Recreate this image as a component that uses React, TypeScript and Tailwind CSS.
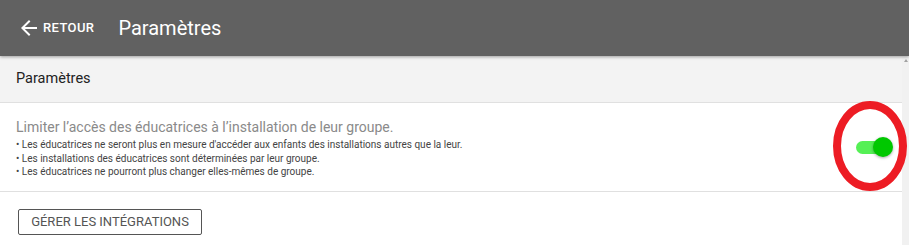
import React from "react";

export default function App() {
  return (
    <div className="w-[909px] h-[245px] overflow-hidden bg-white relative" style={{ fontFamily: "Roboto, 'Liberation Sans', sans-serif" }}>
      <header className="h-[56px] bg-[#616161] flex items-center relative z-10 shadow-[0_1px_3px_rgba(0,0,0,0.35)]">
        <div className="flex items-center pl-[17px]">
          <svg width="24" height="24" viewBox="0 0 24 24" className="text-white">
            <path d="M20 11H7.83l5.59-5.59L12 4l-8 8 8 8 1.41-1.41L7.83 13H20v-2z" fill="currentColor" />
          </svg>
          <span className="ml-[2px] text-white text-[13px] font-medium tracking-[0.4px]">RETOUR</span>
        </div>
        <h1 className="ml-[24px] text-white text-[20px] font-normal">Paramètres</h1>
      </header>
      <div className="flex h-[189px]">
        <main className="flex-1">
          <div className="h-[47px] bg-[#f3f3f3] border-b border-[#e0e0e0] flex items-center pl-[16px]">
            <span className="text-[14.5px] text-[#222]">Paramètres</span>
          </div>
          <div className="h-[89px] border-b border-[#e0e0e0] flex items-center justify-between pl-[16px] pr-[8px]">
            <div className="pt-[2px]">
              <div className="text-[14px] text-[#8a8a8a] leading-[20px]">Limiter l’accès des éducatrices à l’installation de leur groupe.</div>
              <ul className="mt-[1px] text-[10px] text-[#444] leading-[13.5px]">
                <li>• Les éducatrices ne seront plus en mesure d'accéder aux enfants des installations autres que la leur.</li>
                <li>• Les installations des éducatrices sont déterminées par leur groupe.</li>
                <li>• Les éducatrices ne pourront plus changer elles-mêmes de groupe.</li>
              </ul>
            </div>
            <div className="relative w-[36px] h-[20px] mr-[2px] flex items-center">
              <div className="w-[32px] h-[13px] rounded-full bg-[#55f055]" />
              <div className="absolute right-[-1px] top-[0px] w-[20px] h-[20px] rounded-full bg-[#00c800] shadow-[0_1px_3px_rgba(0,0,0,0.35)]" />
            </div>
          </div>
          <div className="pl-[18px] pt-[17px]">
            <button className="h-[26px] w-[184px] border border-[#555] rounded-[2px] text-[13px] text-[#555] flex items-center justify-center">GÉRER LES INTÉGRATIONS</button>
          </div>
        </main>
        <div className="w-[7px] bg-[#f1f1f1] relative">
          <div className="absolute top-[3px] left-[2px] w-0 h-0 border-l-[2px] border-r-[2px] border-b-[3px] border-l-transparent border-r-transparent border-b-[#a3a3a3]" />
        </div>
      </div>
      <svg className="absolute left-[828px] top-[97px] pointer-events-none" width="84" height="100" viewBox="0 0 84 100">
        <ellipse cx="42" cy="49" rx="33" ry="41" fill="none" stroke="#ed1c24" strokeWidth="8" />
      </svg>
    </div>
  );
}
